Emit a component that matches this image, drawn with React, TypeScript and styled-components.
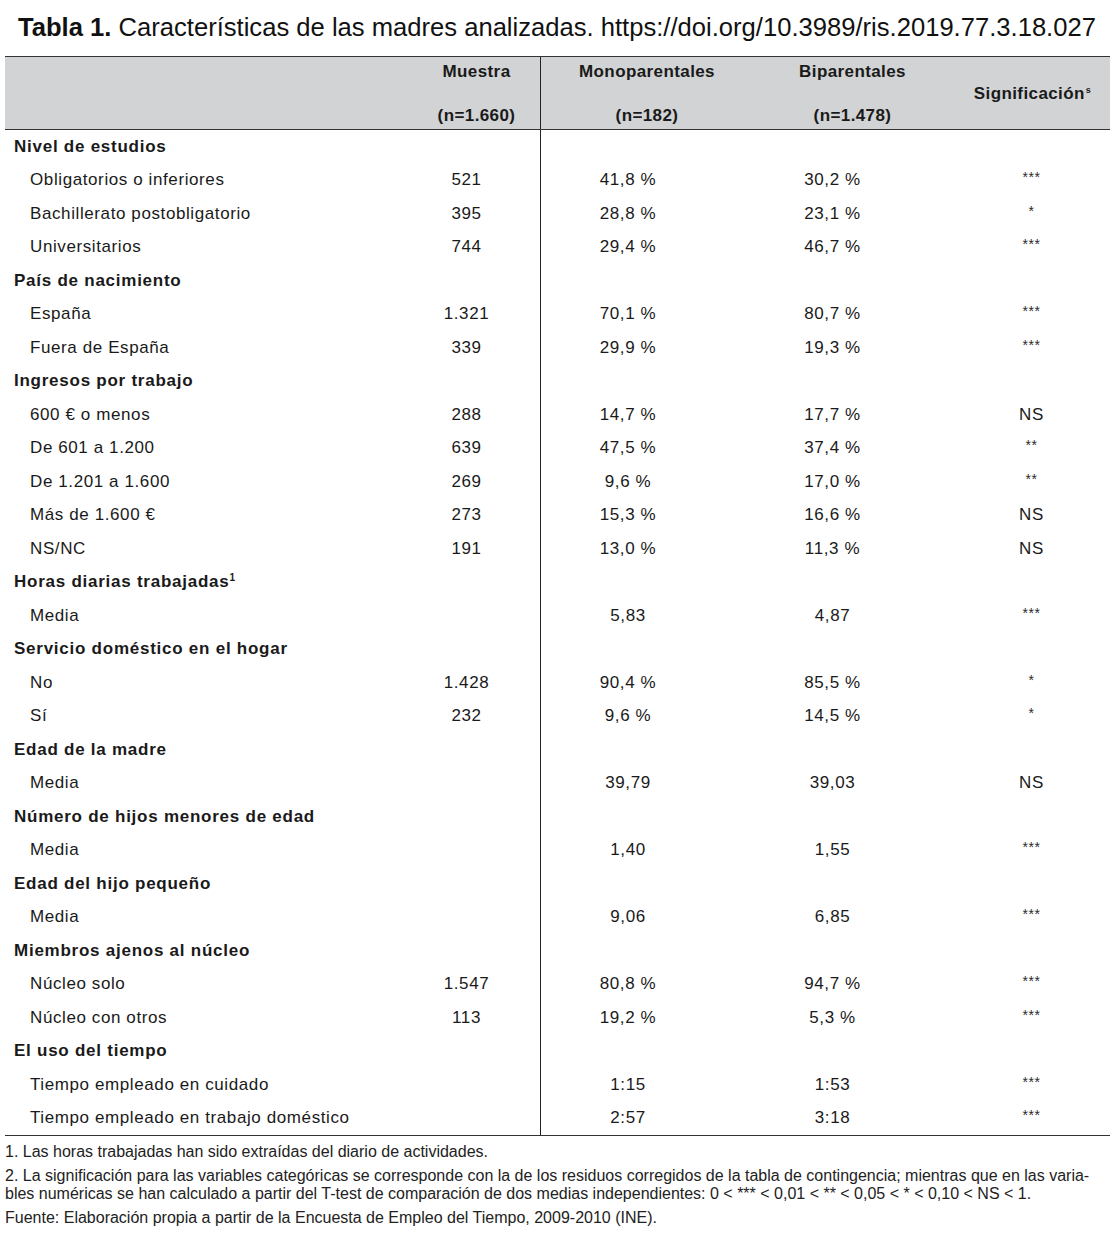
import React from 'react';
import styled, { createGlobalStyle } from 'styled-components';

const GlobalStyle = createGlobalStyle`
  html, body {
    margin: 0;
    padding: 0;
    background: #fff;
  }
  body {
    font-family: "Liberation Sans", Arial, sans-serif;
    color: #1a1a1a;
  }
`;

const Page = styled.div`
  width: 1117px;
  padding: 10px 0 0 5px;
  box-sizing: border-box;
`;

const Title = styled.h1`
  margin: 0 0 0 13px;
  height: 46px;
  font-size: 25.6px;
  font-weight: 400;
  line-height: 34px;
  color: #111;
  white-space: nowrap;

  b {
    font-weight: 700;
  }
`;

const COLS = '395px 141px 209px 205px 155px';

const Table = styled.div`
  width: 1105px;
  border-top: 1.5px solid #333;
  border-bottom: 1.5px solid #333;
`;

const HeadRow = styled.div`
  display: grid;
  grid-template-columns: ${COLS};
  height: 72px;
  background: #d1d3d4;
  border-bottom: 1.5px solid #333;
  font-weight: 700;
  font-size: 17px;
  letter-spacing: 0.4px;
`;

const HeadCell = styled.div<{ $divider?: boolean; $shift?: number }>`
  display: flex;
  flex-direction: column;
  align-items: center;
  justify-content: space-between;
  padding: 4px 0 2px ${(p) => p.$shift ?? 0}px;
  line-height: 22px;
  border-right: ${(p) => (p.$divider ? '1px solid #222' : 'none')};
`;

const HeadSingle = styled.div`
  display: flex;
  align-items: center;
  justify-content: center;
  padding-top: 1px;

  sup {
    font-size: 9px;
    vertical-align: 6px;
    margin-left: 1px;
    line-height: 0;
  }
`;

const Row = styled.div`
  display: grid;
  grid-template-columns: ${COLS};
  height: 33.5px;
  font-size: 17px;
  letter-spacing: 0.6px;
  color: #1a1a1a;
`;

const LabelCell = styled.div<{ $group?: boolean }>`
  display: flex;
  align-items: center;
  padding-left: ${(p) => (p.$group ? 9 : 25)}px;
  font-weight: ${(p) => (p.$group ? 700 : 400)};
  letter-spacing: ${(p) => (p.$group ? 0.75 : 0.6)}px;
  white-space: nowrap;

  sup {
    font-size: 10px;
    vertical-align: 6px;
    line-height: 0;
  }
`;

const ValueCell = styled.div<{ $pad: number; $divider?: boolean }>`
  display: flex;
  align-items: center;
  justify-content: center;
  padding-right: ${(p) => p.$pad}px;
  border-right: ${(p) => (p.$divider ? '1px solid #222' : 'none')};
`;

const Stars = styled.span`
  font-size: 14px;
  letter-spacing: 0.6px;
  position: relative;
  top: -3px;
  color: #2a2a2a;
`;

const Notes = styled.div`
  padding-top: 7px;
  font-size: 16px;
  color: #222;
`;

const Note = styled.p<{ $gap?: number }>`
  margin: 0 0 ${(p) => p.$gap ?? 6}px 0;
  line-height: 18px;
  white-space: nowrap;
`;

type Item =
  | { kind: 'group'; label: React.ReactNode }
  | { kind: 'item'; label: string; n?: string; mono: string; bi: string; sig: string };

const rows: Item[] = [
  { kind: 'group', label: 'Nivel de estudios' },
  { kind: 'item', label: 'Obligatorios o inferiores', n: '521', mono: '41,8 %', bi: '30,2 %', sig: '***' },
  { kind: 'item', label: 'Bachillerato postobligatorio', n: '395', mono: '28,8 %', bi: '23,1 %', sig: '*' },
  { kind: 'item', label: 'Universitarios', n: '744', mono: '29,4 %', bi: '46,7 %', sig: '***' },
  { kind: 'group', label: 'País de nacimiento' },
  { kind: 'item', label: 'España', n: '1.321', mono: '70,1 %', bi: '80,7 %', sig: '***' },
  { kind: 'item', label: 'Fuera de España', n: '339', mono: '29,9 %', bi: '19,3 %', sig: '***' },
  { kind: 'group', label: 'Ingresos por trabajo' },
  { kind: 'item', label: '600 € o menos', n: '288', mono: '14,7 %', bi: '17,7 %', sig: 'NS' },
  { kind: 'item', label: 'De 601 a 1.200', n: '639', mono: '47,5 %', bi: '37,4 %', sig: '**' },
  { kind: 'item', label: 'De 1.201 a 1.600', n: '269', mono: '9,6 %', bi: '17,0 %', sig: '**' },
  { kind: 'item', label: 'Más de 1.600 €', n: '273', mono: '15,3 %', bi: '16,6 %', sig: 'NS' },
  { kind: 'item', label: 'NS/NC', n: '191', mono: '13,0 %', bi: '11,3 %', sig: 'NS' },
  { kind: 'group', label: <span>Horas diarias trabajadas<sup>1</sup></span> },
  { kind: 'item', label: 'Media', mono: '5,83', bi: '4,87', sig: '***' },
  { kind: 'group', label: 'Servicio doméstico en el hogar' },
  { kind: 'item', label: 'No', n: '1.428', mono: '90,4 %', bi: '85,5 %', sig: '*' },
  { kind: 'item', label: 'Sí', n: '232', mono: '9,6 %', bi: '14,5 %', sig: '*' },
  { kind: 'group', label: 'Edad de la madre' },
  { kind: 'item', label: 'Media', mono: '39,79', bi: '39,03', sig: 'NS' },
  { kind: 'group', label: 'Número de hijos menores de edad' },
  { kind: 'item', label: 'Media', mono: '1,40', bi: '1,55', sig: '***' },
  { kind: 'group', label: 'Edad del hijo pequeño' },
  { kind: 'item', label: 'Media', mono: '9,06', bi: '6,85', sig: '***' },
  { kind: 'group', label: 'Miembros ajenos al núcleo' },
  { kind: 'item', label: 'Núcleo solo', n: '1.547', mono: '80,8 %', bi: '94,7 %', sig: '***' },
  { kind: 'item', label: 'Núcleo con otros', n: '113', mono: '19,2 %', bi: '5,3 %', sig: '***' },
  { kind: 'group', label: 'El uso del tiempo' },
  { kind: 'item', label: 'Tiempo empleado en cuidado', mono: '1:15', bi: '1:53', sig: '***' },
  { kind: 'item', label: 'Tiempo empleado en trabajo doméstico', mono: '2:57', bi: '3:18', sig: '***' },
];

const Sig: React.FC<{ value: string }> = ({ value }) =>
  value === 'NS' ? <>{value}</> : <Stars>{value}</Stars>;

const App: React.FC = () => {
  return (
    <>
      <GlobalStyle />
      <Page>
        <Title>
          <b>Tabla 1.</b> Características de las madres analizadas. https://doi.org/10.3989/ris.2019.77.3.18.027
        </Title>

        <Table>
          <HeadRow>
            <HeadCell />
            <HeadCell $divider $shift={13}>
              <span>Muestra</span>
              <span>(n=1.660)</span>
            </HeadCell>
            <HeadCell $shift={3}>
              <span>Monoparentales</span>
              <span>(n=182)</span>
            </HeadCell>
            <HeadCell>
              <span>Biparentales</span>
              <span>(n=1.478)</span>
            </HeadCell>
            <HeadSingle>
              <span>
                Significación<sup>s</sup>
              </span>
            </HeadSingle>
          </HeadRow>

          {rows.map((r, i) =>
            r.kind === 'group' ? (
              <Row key={i}>
                <LabelCell $group>{r.label}</LabelCell>
                <ValueCell $pad={0} $divider />
                <ValueCell $pad={0} />
                <ValueCell $pad={0} />
                <ValueCell $pad={0} />
              </Row>
            ) : (
              <Row key={i}>
                <LabelCell>{r.label}</LabelCell>
                <ValueCell $pad={7} $divider>{r.n ?? ''}</ValueCell>
                <ValueCell $pad={35}>{r.mono}</ValueCell>
                <ValueCell $pad={40}>{r.bi}</ValueCell>
                <ValueCell $pad={2}>
                  <Sig value={r.sig} />
                </ValueCell>
              </Row>
            )
          )}
        </Table>

        <Notes>
          <Note>1. Las horas trabajadas han sido extraídas del diario de actividades.</Note>
          <Note $gap={0}>
            2. La significación para las variables categóricas se corresponde con la de los residuos corregidos de la tabla de contingencia; mientras que en las varia-
          </Note>
          <Note>
            bles numéricas se han calculado a partir del T-test de comparación de dos medias independientes: 0 &lt; *** &lt; 0,01 &lt; ** &lt; 0,05 &lt; * &lt; 0,10 &lt; NS &lt; 1.
          </Note>
          <Note>Fuente: Elaboración propia a partir de la Encuesta de Empleo del Tiempo, 2009-2010 (INE).</Note>
        </Notes>
      </Page>
    </>
  );
};

export default App;
